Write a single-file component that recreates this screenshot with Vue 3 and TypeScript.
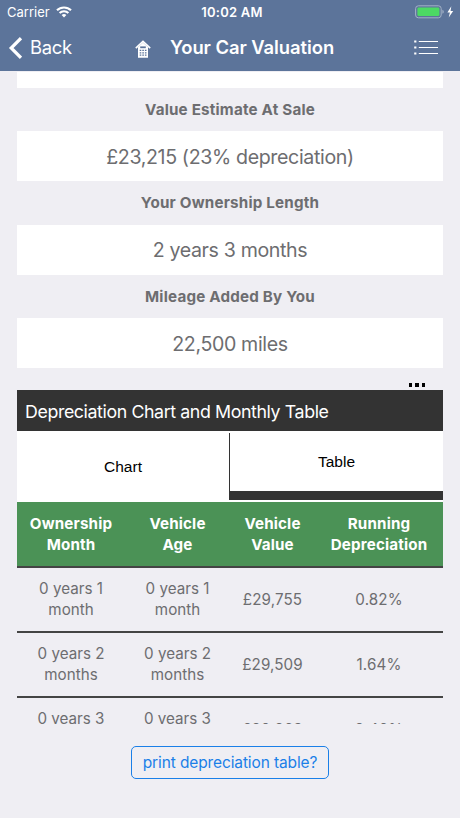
<script setup lang="ts">
interface Estimate {
  label: string
  value: string
  cls: string
}
interface Row {
  month: string[]
  value: string
  drop: string
}

const estimates: Estimate[] = [
  { label: 'Value Estimate At Sale', value: '£23,215 (23% depreciation)', cls: 'sale' },
  { label: 'Your Ownership Length', value: '2 years 3 months', cls: 'length' },
  { label: 'Mileage Added By You', value: '22,500 miles', cls: 'mileage' },
]

const headings: string[][] = [
  ['Ownership', 'Month'],
  ['Vehicle', 'Age'],
  ['Vehicle', 'Value'],
  ['Running', 'Depreciation'],
]

const rows: Row[] = [
  { month: ['0 years 1', 'month'], value: '£29,755', drop: '0.82%' },
  { month: ['0 years 2', 'months'], value: '£29,509', drop: '1.64%' },
  { month: ['0 years 3', 'months'], value: '£29,263', drop: '2.46%' },
]
</script>

<template>
  <div class="screen">
    <header class="top">
      <div class="status">
        <div class="carrier">
          <span>Carrier</span>
          <svg class="wifi" width="16" height="12" viewBox="0 0 16 12" fill="none" stroke="#fff" stroke-width="2.1">
            <path d="M1 4.3a10 10 0 0 1 14 0" />
            <path d="M3.6 7.1a6.2 6.2 0 0 1 8.8 0" />
            <path d="M8 11.6 5.6 9.1a3.4 3.4 0 0 1 4.8 0z" fill="#fff" stroke="none" />
          </svg>
        </div>
        <span class="clock">10:02 AM</span>
        <div class="power">
          <svg width="40" height="14" viewBox="0 0 40 14">
            <rect x="0.6" y="0.8" width="25.6" height="12" rx="2.8" fill="none" stroke="#a3b1c6" stroke-width="1" />
            <rect x="2.4" y="2.5" width="22" height="8.6" rx="1.4" fill="#4cd964" />
            <path d="M27.4 4.8q1.4.6 1.4 2t-1.4 2z" fill="#a3b1c6" />
            <path d="M36.3 1.2 32.4 7.4h2.5l-1.2 5.2 4.5-6.6h-2.6z" fill="#fff" />
          </svg>
        </div>
      </div>
      <nav class="nav">
        <div class="back">
          <svg width="14" height="22" viewBox="0 0 14 22" fill="none" stroke="#fff" stroke-width="3.2">
            <path d="M13 1.2 3.2 11l9.8 9.8" />
          </svg>
          <span>Back</span>
        </div>
        <div class="heading">
          <svg width="16" height="18" viewBox="0 0 16 18">
            <path d="M.8 8.2 8 1.4l7.2 6.8" fill="none" stroke="#fff" stroke-width="1.6" />
            <path d="M3 7.2 8 2.6l5 4.6v10.6H3z" fill="#fff" />
            <path d="M5.2 6.4h5.6v1.8H5.2z" fill="#5c749a" />
            <path d="M4.7 10.4h6.8M4.7 12.8h6.8M4.7 15.2h6.8" stroke="#5c749a" stroke-width="1.2" stroke-dasharray="1.6 1" />
          </svg>
          <h1>Your Car Valuation</h1>
        </div>
        <svg class="menu" width="24" height="16" viewBox="0 0 24 16" stroke="#fff">
          <path d="M4.8 1.5H24M4.8 7.5H24M4.8 13.5H24" stroke-width="1" />
          <path d="M.2 1.5h2.2M.2 7.5h2.2M.2 13.5h2.2" stroke-width="2" />
        </svg>
      </nav>
    </header>

    <main>
      <div class="box partial"></div>
      <section v-for="e in estimates" :key="e.cls" :class="['estimate', e.cls]">
        <h2><span>{{ e.label }}</span></h2>
        <div class="box"><span>{{ e.value }}</span></div>
      </section>

      <div class="more"><i></i><i></i><i></i></div>

      <h3 class="bar">Depreciation Chart and Monthly Table</h3>
      <div class="tabs">
        <div class="tab">Chart</div>
        <div class="tab active">Table</div>
      </div>

      <div class="scroller">
        <div class="row head">
          <div v-for="(h, i) in headings" :key="i" class="cell">
            <span v-for="line in h" :key="line">{{ line }}</span>
          </div>
        </div>
        <div v-for="r in rows" :key="r.value" class="row">
          <div class="cell span"><span v-for="m in r.month" :key="m">{{ m }}</span></div>
          <div class="cell span"><span v-for="m in r.month" :key="m">{{ m }}</span></div>
          <div class="cell figure">{{ r.value }}</div>
          <div class="cell figure">{{ r.drop }}</div>
        </div>
      </div>

      <button class="print" type="button">print depreciation table?</button>
    </main>
  </div>
</template>

<style>
body {
  margin: 0;
  background: #efeef3;
}
</style>

<style scoped>
.screen {
  width: 460px;
  height: 818px;
  overflow: hidden;
  background: #efeef3;
  color: #6d6d70;
  font-family: Inter, "Liberation Sans", sans-serif;
}
h1, h2, h3 {
  margin: 0;
}
.top {
  box-sizing: border-box;
  height: 71px;
  background: #5c749a;
  color: #fff;
}
.status {
  display: grid;
  grid-template-columns: 1fr auto 1fr;
  align-items: center;
  height: 24px;
  padding: 0 5px 0 7px;
  font-size: 13px;
}
.carrier {
  display: flex;
  align-items: center;
  gap: 6px;
}
.clock {
  padding-left: 2px;
  font-weight: 600;
  letter-spacing: 0.25px;
}
.power {
  display: flex;
  justify-content: flex-end;
}
.nav {
  display: flex;
  align-items: center;
  height: 47px;
  padding: 0 22px 0 8px;
}
.back {
  display: flex;
  align-items: center;
  gap: 8px;
  width: 127px;
  font-size: 18.4px;
  letter-spacing: -0.3px;
}
.back span {
  margin-top: -1px;
}
.heading {
  display: flex;
  align-items: center;
  gap: 19px;
  flex: 1;
}
.heading svg {
  margin-top: 2px;
}
h1 {
  margin-top: -1px;
  font-size: 18.4px;
  font-weight: 600;
  letter-spacing: -0.05px;
  white-space: nowrap;
}
main {
  display: flex;
  flex-direction: column;
  padding: 1px 17px 0;
}
.box {
  display: flex;
  align-items: center;
  justify-content: center;
  height: 50px;
  background: #fff;
  font-size: 19.6px;
  letter-spacing: -0.36px;
}
.box span {
  margin-top: 2px;
}
.length .box span {
  margin-top: 0;
}
.partial {
  height: 16px;
}
.estimate h2 {
  display: flex;
  align-items: center;
  justify-content: center;
  height: 43.35px;
  font-size: 15.2px;
  font-weight: 700;
  letter-spacing: 0.2px;
}
.length h2 span {
  margin-top: -1px;
}
.more {
  display: flex;
  align-items: flex-end;
  justify-content: flex-end;
  gap: 3px;
  height: 19px;
  padding: 0 18px 3px 0;
}
.more i {
  width: 3.4px;
  height: 4px;
  background: #000;
}
.bar {
  height: 41px;
  padding-left: 8px;
  background: #333;
  color: #fff;
  font-size: 17.8px;
  font-weight: 400;
  line-height: 43px;
  letter-spacing: -0.4px;
  white-space: nowrap;
}
.tabs {
  display: grid;
  grid-template-columns: 212px 214px;
  height: 67px;
  padding: 2px 0;
  background: #fff;
  color: #000;
  font: 15.5px "Liberation Sans", Arial, sans-serif;
}
.tab {
  display: flex;
  align-items: center;
  justify-content: center;
}
.active {
  border-left: 1px solid #333;
  border-bottom: 9px solid #333;
}
.scroller {
  height: 222px;
  overflow: hidden;
}
.row {
  box-sizing: border-box;
  display: grid;
  grid-template-columns: 108px 105px 85px 128px;
  height: 65px;
  border-bottom: 2px solid #444;
  font-size: 15.2px;
  line-height: 21px;
}
.head {
  height: 66px;
  background: #4b9256;
  color: #fff;
  font-weight: 700;
  letter-spacing: 0.15px;
}
.cell {
  display: flex;
  flex-direction: column;
  align-items: center;
  justify-content: center;
}
.span {
  padding-bottom: 2px;
}
.figure {
  letter-spacing: 0.1px;
}
.print {
  align-self: center;
  height: 33px;
  margin-top: 22px;
  padding: 0 11px;
  border: 1px solid #1a7fe8;
  border-radius: 5px;
  background: transparent;
  color: #1a7fe8;
  font: 15.5px Inter, sans-serif;
  letter-spacing: -0.12px;
  white-space: nowrap;
}
</style>
